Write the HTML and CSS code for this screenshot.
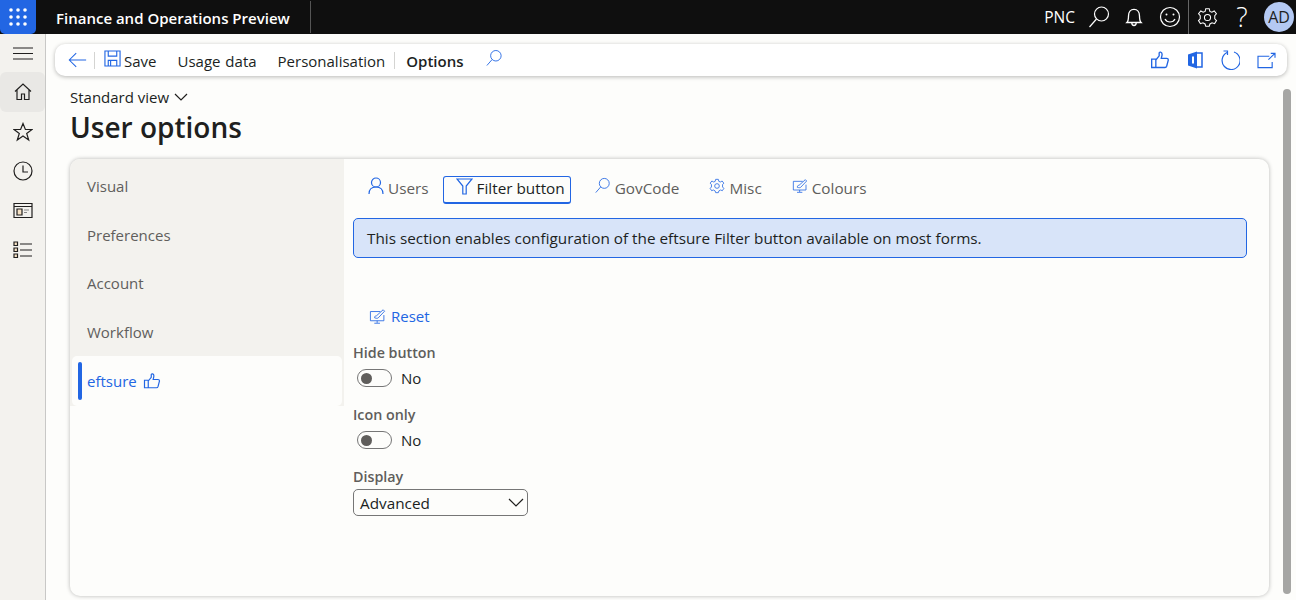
FILE: index.html
```html
<!DOCTYPE html>
<html lang="en">
<head>
    <meta charset="UTF-8">
    <title>User options</title>
    <link rel="stylesheet" href="styles.css">
</head>
<body>
    <svg class="defs" width="0" height="0">
        <symbol id="i-search" viewBox="0 0 24 24"><circle cx="14.5" cy="9" r="7"/><path d="M9.5 14 2.5 22"/></symbol>
        <symbol id="i-like" viewBox="0 0 24 24"><path d="M2 11h5v10H2zM7 12l4-5V3.500c0-1.500 3.500-1.500 3.500 1.500 0 2-.7 3.500-1 5H20c1.500 0 2 1 2 2l-2 7.500c-.3 1-1 1.500-2 1.500H10c-1.500 0-3-.5-3-1"/></symbol>
        <symbol id="i-edit" viewBox="0 0 24 24"><path d="M16 5H2v13h19v-8M11.500 18v3M7.500 21.500h8"/><path d="M8 14c0-3 1.500-3 2.500-3L20 2.500l2 2-9 9.500c-1 1-3 .5-5 0z"/></symbol>
    </svg>

    <header class="topbar">
        <button class="waffle">
            <svg width="20" height="20" viewBox="0 0 20 20"><circle cx="3" cy="3" r="1.8"/><circle cx="10" cy="3" r="1.8"/><circle cx="17" cy="3" r="1.8"/><circle cx="3" cy="10" r="1.8"/><circle cx="10" cy="10" r="1.8"/><circle cx="17" cy="10" r="1.8"/><circle cx="3" cy="17" r="1.8"/><circle cx="10" cy="17" r="1.8"/><circle cx="17" cy="17" r="1.8"/></svg>
        </button>
        <div class="app-title">Finance and Operations Preview</div>
        <div class="topbar-right">
            <span class="company">PNC</span>
            <svg class="top-icon search-top" width="24" height="24"><use href="#i-search"/></svg>
            <svg class="top-icon bell" width="22" height="22" viewBox="0 0 20 20"><path d="M3.500 15c1.500-1.500 1.500-3 1.500-6 0-3.500 2-6 5-6s5 2.500 5 6c0 3 0 4.500 1.500 6zM8 15.500c0 3 4 3 4 0"/></svg>
            <svg class="top-icon smile" width="22" height="22" viewBox="0 0 22 22"><circle cx="11" cy="11" r="9.500"/><path d="M6 13c2 4 8 4 10 0"/><circle class="dot" cx="7.500" cy="8.500" r="1"/><circle class="dot" cx="14.500" cy="8.500" r="1"/></svg>
            <div class="top-divider"></div>
            <svg class="top-icon gear" width="21" height="21" viewBox="0 0 24 24"><circle cx="12" cy="12" r="3.500"/><path d="M10 2h4l.7 3 2.300 1 2.700-1.500 2.500 3.200L20.300 10v3.500l2 2-2.200 3.500-2.900-1-2.400 1.400L14 22h-4l-.8-2.600-2.400-1.400-2.900 1-2.200-3.500 2-2V10L1.800 7.700l2.500-3.200L7 6l2.300-1z"/></svg>
            <span class="help">?</span>
            <div class="avatar">AD</div>
        </div>
    </header>

    <div class="main">
        <nav class="sidenav">
            <button class="nav-btn menu-btn">
                <svg width="20" height="13" viewBox="0 0 20 13"><path d="M0 1h20M0 6.500h20M0 12h20"/></svg>
            </button>
            <button class="nav-btn active">
                <svg width="18" height="18" viewBox="0 0 18 18"><path d="M1 8.500 9 1l8 7.500M3 7v9.500h4.500V11h3v5.500H15V7"/></svg>
            </button>
            <button class="nav-btn">
                <svg width="20" height="20" viewBox="0 0 20 20"><path d="m10 1.500 2.400 6H19l-5.300 4 2 6.500L10 14l-5.700 4 2-6.500L1 7.500h6.600z"/></svg>
            </button>
            <button class="nav-btn">
                <svg width="20" height="20" viewBox="0 0 20 20"><circle cx="10" cy="10" r="9"/><path d="M10 4.500V11h5"/></svg>
            </button>
            <button class="nav-btn">
                <svg width="20" height="18" viewBox="0 0 20 18"><path d="M1 1.500h18v14H1zM1 4.500h18"/><path class="orange" d="M4 7h5v6H4z"/><path class="thin" d="M11 8h5M11 10.500h3"/></svg>
            </button>
            <button class="nav-btn">
                <svg width="20" height="18" viewBox="0 0 20 18"><path class="orange" d="M1 1h3.500v3.500H1zM1 7h3.500v3.500H1zM1 13h3.500v3.500H1z"/><path d="M7 3h12M7 9h12M7 15h12"/></svg>
            </button>
        </nav>

        <div class="content">
            <div class="action-bar">
                <svg class="back" width="19" height="16" viewBox="0 0 22 18"><path d="M21 9H1.500M9.500 1 1.500 9l8 8"/></svg>
                <div class="bar-sep"></div>
                <svg class="blue-icon save" width="17" height="17" viewBox="0 0 18 18"><path d="M1 1h16v16H1z"/><path d="M4.500 1v5.500h9V1M4.500 17v-6h9v6"/><path d="M7 11v6"/></svg>
                <span class="action save-label">Save</span>
                <span class="action">Usage data</span>
                <span class="action">Personalisation</span>
                <div class="bar-sep options-sep"></div>
                <span class="action options">Options</span>
                <svg class="blue-icon bar-search" width="18" height="18"><use href="#i-search"/></svg>
                <div class="bar-right">
                    <svg class="blue-icon like" width="20" height="20"><use href="#i-like"/></svg>
                    <svg class="office" width="16" height="20" viewBox="0 0 16 20"><path d="M1 4.500 10 1.500v17L1 15.500z" fill="#2266e3"/><path d="M10 3h5v14h-5" fill="none" stroke="#2266e3" stroke-width="1.500"/><path d="M6 6.500v7" stroke="#fff" stroke-width="2"/></svg>
                    <svg class="blue-icon" width="20" height="20" viewBox="0 0 20 20"><path d="M7 2.500A9 9 0 1 0 14 2M3.500 1h4v4"/></svg>
                    <svg class="blue-icon" width="19" height="17" viewBox="0 0 20 18"><path d="M13 4.500H1v12h15v-6M12 8l7-6.500M14.500 1.500h4.500V6"/></svg>
                </div>
            </div>

            <div class="page-scroll">
                <div class="page">
                    <div class="view-name">Standard view
                        <svg width="14" height="8" viewBox="0 0 14 8"><path d="m1 1 6 6 6-6"/></svg>
                    </div>
                    <h1>User options</h1>

                    <div class="card">
                        <div class="tabs">
                            <div class="tab">Visual</div>
                            <div class="tab">Preferences</div>
                            <div class="tab">Account</div>
                            <div class="tab">Workflow</div>
                            <div class="tab selected">eftsure
                                <svg class="blue-icon like" width="18" height="18"><use href="#i-like"/></svg>
                            </div>
                        </div>

                        <div class="panel">
                            <div class="subtabs">
                                <div class="subtab">
                                    <svg class="blue-icon" width="16" height="18" viewBox="0 0 16 18"><circle cx="8" cy="5.500" r="4.500"/><path d="M1 17c0-5 3-7 7-7s7 2 7 7"/></svg>
                                    Users
                                </div>
                                <div class="subtab current">
                                    <svg class="blue-icon" width="17" height="17" viewBox="0 0 17 17"><path d="M1 1h15l-5.800 7v8H6.800V8z"/></svg>
                                    Filter button
                                </div>
                                <div class="subtab">
                                    <svg class="blue-icon" width="17" height="17"><use href="#i-search"/></svg>
                                    GovCode
                                </div>
                                <div class="subtab">
                                    <svg class="blue-icon" width="16" height="16" viewBox="0 0 24 24"><circle cx="12" cy="12" r="3.500"/><path d="M10 2h4l.7 3 2.300 1 2.700-1.500 2.500 3.200L20.300 10v3.500l2 2-2.200 3.500-2.900-1-2.400 1.400L14 22h-4l-.8-2.600-2.400-1.400-2.900 1-2.200-3.500 2-2V10L1.800 7.700l2.500-3.200L7 6l2.300-1z"/></svg>
                                    Misc
                                </div>
                                <div class="subtab">
                                    <svg class="blue-icon" width="16" height="16"><use href="#i-edit"/></svg>
                                    Colours
                                </div>
                            </div>

                            <div class="info-box">This section enables configuration of the eftsure Filter button available on most forms.</div>

                            <div class="reset">
                                <svg class="blue-icon" width="17" height="17"><use href="#i-edit"/></svg>
                                Reset
                            </div>

                            <div class="field">
                                <label>Hide button</label>
                                <div class="toggle-row"><span class="toggle"></span>No</div>
                            </div>
                            <div class="field">
                                <label>Icon only</label>
                                <div class="toggle-row"><span class="toggle"></span>No</div>
                            </div>
                            <div class="field">
                                <label>Display</label>
                                <div class="select">Advanced
                                    <svg width="16" height="9" viewBox="0 0 16 9"><path d="m1 1 7 7 7-7"/></svg>
                                </div>
                            </div>
                        </div>
                    </div>
                </div>
                <div class="scrollbar"></div>
            </div>
        </div>
    </div>
</body>
</html>
```

FILE: styles.css
```css
* {
    margin: 0;
    padding: 0;
    box-sizing: border-box;
}

html, body {
    height: 100%;
    overflow: hidden;
}

body {
    display: flex;
    flex-direction: column;
    font-family: "Open Sans", "Noto Sans", Arial, sans-serif;
    font-size: 15px;
    color: #201f1e;
    background: #fdfdfb;
}

button {
    border: none;
    background: none;
}

svg {
    fill: none;
    stroke: #201f1e;
    stroke-width: 1.2;
    flex: none;
}

.defs {
    position: absolute;
}

.blue-icon {
    stroke: #2266e3;
}

.like {
    stroke-width: 1.6;
}

/* top bar */
.topbar {
    display: flex;
    align-items: center;
    height: 34px;
    flex: none;
    background: #0f0f0f;
    color: #fff;
}

.waffle {
    display: flex;
    align-items: center;
    justify-content: center;
    width: 36px;
    height: 34px;
    background: #2266e3;
    border-radius: 0 0 5px 5px;
}

.waffle svg {
    fill: #fff;
    stroke: none;
}

.app-title {
    width: 255px;
    height: 32px;
    margin-top: -1px;
    margin-left: 20px;
    line-height: 34px;
    font-size: 15px;
    font-weight: 600;
    border-right: 1px solid #555;
}

.topbar-right {
    display: flex;
    align-items: center;
    margin-left: auto;
    height: 100%;
}

.company {
    font-size: 15.5px;
}

.top-icon {
    stroke: #fff;
}

.top-icon .dot {
    fill: #fff;
    stroke: none;
}

.search-top {
    margin-left: 12px;
}

.bell {
    margin-left: 12px;
}

.smile {
    margin-left: 14px;
}

.top-divider {
    width: 1px;
    height: 34px;
    margin-left: 7px;
    background: #666;
}

.gear {
    margin-left: 8px;
}

.help {
    width: 20px;
    margin-left: 14px;
    font-size: 27px;
    font-weight: 300;
    line-height: 34px;
    text-align: center;
}

.avatar {
    width: 30px;
    height: 30px;
    margin: 0 2px 0 12px;
    border-radius: 50%;
    background: #b4c9f3;
    color: #201f1e;
    font-size: 16px;
    line-height: 30px;
    text-align: center;
}

/* left navigation */
.main {
    display: flex;
    flex: 1;
    min-height: 0;
}

.sidenav {
    display: flex;
    flex-direction: column;
    align-items: center;
    width: 46px;
    flex: none;
    background: #f3f2ee;
    border-right: 1px solid #c8c8c6;
}

.nav-btn {
    display: flex;
    align-items: center;
    justify-content: center;
    width: 45px;
    height: 39.5px;
    flex: none;
    border-radius: 6px;
}

.menu-btn {
    height: 38px;
}

.menu-btn svg {
    stroke-width: 1;
}

.nav-btn.active {
    height: 40px;
    background: #e9e8e5;
}

.orange {
    fill: #f6e2c4;
}

.thin {
    stroke: #888;
}

/* action bar */
.content {
    display: flex;
    flex-direction: column;
    flex: 1;
    min-width: 0;
}

.action-bar {
    display: flex;
    align-items: center;
    height: 32px;
    flex: none;
    margin: 10px 9px 0 9px;
    padding-left: 13px;
    background: #fff;
    border-radius: 10px;
    box-shadow: 0 1px 4px rgba(0, 0, 0, 0.28);
}

.back {
    stroke: #2266e3;
}

.bar-sep {
    width: 1px;
    height: 17px;
    margin: 0 9px 0 7px;
    background: #d4d4d2;
}

.action {
    margin-top: 1px;
    margin-right: 21px;
    word-spacing: 1px;
}

.save {
    margin-top: -4px;
    margin-right: 3px;
}

.options-sep {
    margin: 0 11px 0 -12px;
}

.options {
    font-weight: 600;
}

.bar-search {
    margin-top: -4px;
}

.bar-right {
    display: flex;
    align-items: center;
    gap: 17px;
    margin-left: auto;
    padding-right: 11px;
}

.office {
    stroke: none;
}

/* page */
.page-scroll {
    display: flex;
    flex: 1;
    min-height: 0;
}

.page {
    flex: 1;
    min-width: 0;
    padding: 10px 14px 0 24px;
}

.view-name {
    display: flex;
    align-items: center;
    gap: 5px;
    height: 22px;
}

h1 {
    height: 40px;
    font-size: 28px;
    font-weight: 600;
    line-height: 38px;
}

.scrollbar {
    width: 8px;
    margin: 13px 5px 6px 0;
    background: #a6a6a4;
    border-radius: 4px;
    flex: none;
}

.card {
    display: flex;
    height: 437px;
    margin-top: 11px;
    background: #fdfdfb;
    border-radius: 10px;
    box-shadow: 0 0 4px rgba(0, 0, 0, 0.28);
    overflow: hidden;
}

.tabs {
    align-self: flex-start;
    width: 274px;
    flex: none;
    padding-top: 3px;
    background: #f3f2ee;
}

.tab {
    display: flex;
    align-items: center;
    gap: 6px;
    height: 48.5px;
    padding-left: 17px;
    color: #605e5c;
}

.tab.selected {
    position: relative;
    height: 50px;
    margin: 0 2px;
    padding-left: 15px;
    background: #fdfdfb;
    color: #2266e3;
    border-radius: 5px;
}

.tab.selected::before {
    content: "";
    position: absolute;
    left: 6px;
    top: 6px;
    bottom: 6px;
    width: 4px;
    background: #2266e3;
    border-radius: 2px;
}

.panel {
    flex: 1;
    min-width: 0;
    padding: 17px 22px 0 9px;
}

.subtabs {
    display: flex;
    align-items: center;
    height: 28px;
    gap: 30px;
    padding-left: 15px;
}

.subtab {
    display: flex;
    align-items: center;
    gap: 4px;
    height: 28px;
    padding-bottom: 5px;
    font-size: 15.3px;
    color: #605e5c;
}

.subtab svg {
    margin-top: -4px;
}

.subtab.current {
    margin: 0 -7px 0 -16px;
    padding: 0 5px 3px 12px;
    border: 1px solid #2266e3;
    border-bottom-width: 2px;
    border-radius: 3px;
    color: #201f1e;
}

.info-box {
    height: 40px;
    margin-top: 14px;
    padding-left: 13px;
    line-height: 38px;
    font-size: 15.3px;
    background: #d8e4f9;
    border: 1px solid #2266e3;
    border-radius: 5px;
}

.reset {
    display: flex;
    align-items: center;
    gap: 5px;
    height: 20px;
    margin-top: 48px;
    padding-left: 16px;
    color: #2266e3;
}

.field {
    height: 48px;
    margin-top: 14px;
}

.reset + .field {
    margin-top: 17px;
}

.field label {
    display: block;
    height: 20px;
    margin-bottom: 2px;
    font-size: 14.3px;
    font-weight: 600;
    color: #605e5c;
}

.toggle-row {
    display: flex;
    align-items: center;
    gap: 9px;
    height: 26px;
    padding-left: 4px;
}

.toggle {
    position: relative;
    width: 35px;
    height: 18px;
    border: 1px solid #767676;
    border-radius: 9px;
}

.toggle::before {
    content: "";
    position: absolute;
    left: 3px;
    top: 2.5px;
    width: 11px;
    height: 11px;
    background: #605e5c;
    border-radius: 50%;
}

.select {
    display: flex;
    align-items: center;
    justify-content: space-between;
    width: 175px;
    height: 27px;
    margin-top: 2px;
    padding: 0 3px 0 6px;
    font-size: 15.3px;
    border: 1px solid #767676;
    border-radius: 5px;
}
```
